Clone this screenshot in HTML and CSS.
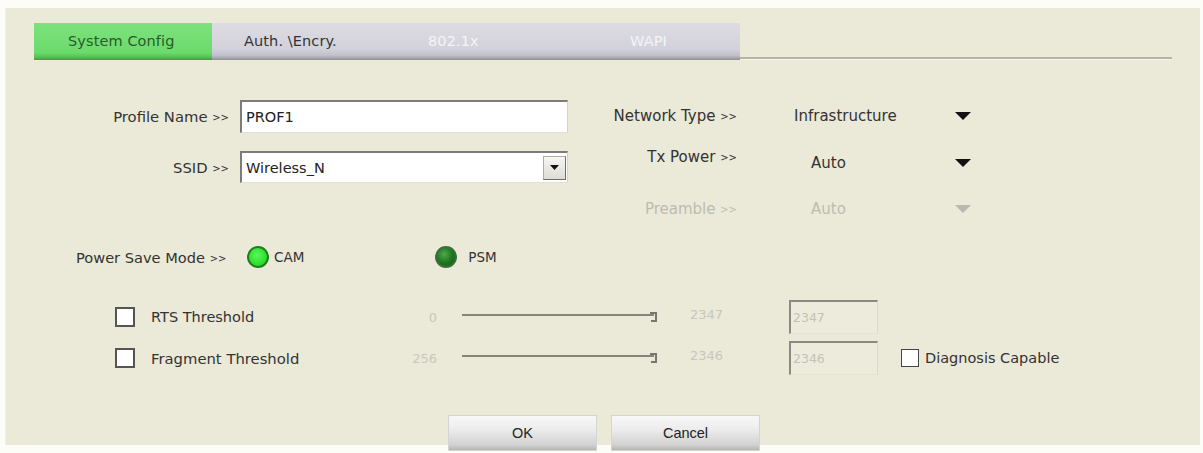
FILE: index.html
```html
<!DOCTYPE html>
<html>
<head>
<meta charset="utf-8">
<link rel="stylesheet" href="styles.css">
</head>
<body>
<div class="panel">
  <div class="tabs">
    <div class="tab tab-sys">System Config</div>
    <div class="tab tab-auth">Auth. \Encry.</div>
    <div class="tab tab-8021x disabled">802.1x</div>
    <div class="tab tab-wapi disabled">WAPI</div>
    <div class="tab-rule"></div>
  </div>

  <div class="top">
    <div class="left">
      <div class="lrow lrow-1">
        <div class="llabel">Profile Name <span class="gt">&gt;&gt;</span></div>
        <div class="field">PROF1</div>
      </div>
      <div class="lrow lrow-2">
        <div class="llabel">SSID <span class="gt">&gt;&gt;</span></div>
        <div class="field combo"><span class="combo-text">Wireless_N</span>
          <span class="combo-btn"><svg width="9" height="5" viewBox="0 0 9 5"><polygon points="0,0 9,0 4.5,5" fill="#111"/></svg></span>
        </div>
      </div>
    </div>
    <div class="right">
      <div class="rrow rrow-1">
        <div class="rlabel">Network Type <span class="gt">&gt;&gt;</span></div>
        <div class="rvalue">Infrastructure</div>
        <svg class="arrow" width="16" height="8" viewBox="0 0 16 8"><polygon points="0,0 16,0 8,8" fill="#111"/></svg>
      </div>
      <div class="rrow rrow-2">
        <div class="rlabel up">Tx Power <span class="gt">&gt;&gt;</span></div>
        <div class="rvalue down center">Auto</div>
        <svg class="arrow down" width="16" height="8" viewBox="0 0 16 8"><polygon points="0,0 16,0 8,8" fill="#111"/></svg>
      </div>
      <div class="rrow rrow-3 dim">
        <div class="rlabel">Preamble <span class="gt">&gt;&gt;</span></div>
        <div class="rvalue center">Auto</div>
        <svg class="arrow" width="16" height="8" viewBox="0 0 16 8"><polygon points="0,0 16,0 8,8" fill="#b8b8b0"/></svg>
      </div>
    </div>
  </div>

  <div class="psm-row">
    <div class="psm-label">Power Save Mode <span class="gt">&gt;&gt;</span></div>
    <div class="radio-group radio-cam">
      <span class="radio on"></span><span class="radio-text">CAM</span>
    </div>
    <div class="radio-group radio-psm">
      <span class="radio dark"></span><span class="radio-text">PSM</span>
    </div>
  </div>

  <div class="thr-row thr-rts">
    <span class="check"></span>
    <span class="thr-label">RTS Threshold</span>
    <span class="thr-min">0</span>
    <svg class="slider" width="200" height="14" viewBox="0 0 200 14"><path d="M0 5 H192" stroke="#85857f" stroke-width="2" fill="none"/><path d="M188 3 H194 V11 H189" stroke="#77776f" stroke-width="2" fill="none"/></svg>
    <span class="thr-max">2347</span>
    <span class="thr-box">2347</span>
  </div>
  <div class="thr-row thr-frag">
    <span class="check"></span>
    <span class="thr-label">Fragment Threshold</span>
    <span class="thr-min">256</span>
    <svg class="slider" width="200" height="14" viewBox="0 0 200 14"><path d="M0 5 H192" stroke="#85857f" stroke-width="2" fill="none"/><path d="M188 3 H194 V11 H189" stroke="#77776f" stroke-width="2" fill="none"/></svg>
    <span class="thr-max">2346</span>
    <span class="thr-box">2346</span>
    <span class="check small"></span>
    <span class="diag-label">Diagnosis Capable</span>
  </div>

  <div class="buttons">
    <div class="btn btn-ok">OK</div>
    <div class="btn btn-cancel">Cancel</div>
  </div>
</div>
</body>
</html>
```

FILE: styles.css
```css
html, body {
  margin: 0;
  padding: 0;
  background: #fdfdf8;
}
body {
  font-family: "DejaVu Sans", Verdana, sans-serif;
  color: #333;
  width: 1203px;
  height: 453px;
  overflow: hidden;
}
.panel {
  margin: 8px 3px 0 5px;
  height: 437px;
  background: #ebe9d8;
  border-left: 1px solid #f2f1e6;
  box-sizing: border-box;
}

/* tabs */
.tabs {
  display: flex;
  padding-top: 15px;
  padding-left: 28px;
  height: 52px;
  box-sizing: border-box;
}
.tab {
  height: 37px;
  box-sizing: border-box;
  font-size: 14.5px;
  line-height: 37px;
  white-space: nowrap;
  letter-spacing: 0.1px;
}
.tab-sys {
  width: 178px;
  padding-left: 34px;
  color: #2c5a2c;
  background: linear-gradient(#7de27d, #6bdb6b 80%, #55c255 92%, #3f9c3f);
}
.tab-auth, .tab-8021x, .tab-wapi {
  background: linear-gradient(#dddce2, #d3d2dc 70%, #c1c0ca 88%, #8f8f96);
}
.tab-auth { width: 183px; padding-left: 32px; color: #333; }
.tab-8021x { width: 200px; padding-left: 33px; }
.tab-wapi { width: 145px; padding-left: 35px; }
.tab.disabled { color: #f4f4f6; }
.tab-rule {
  align-self: flex-end;
  width: 432px;
  height: 3px;
  border-top: 2px solid #b6b4a5;
  border-bottom: 1px solid #f7f6ee;
  box-sizing: border-box;
}

/* top section */
.top {
  display: flex;
  margin-top: 40px;
  height: 130px;
}
.left { width: 562px; }
.lrow {
  display: flex;
  align-items: center;
}
.lrow-1 { height: 33px; }
.lrow-2 { height: 32px; margin-top: 18px; }
.llabel {
  width: 223px;
  text-align: right;
  font-size: 14.8px;
  color: #333;
  white-space: nowrap;
}
.gt {
  font-size: 10px;
  letter-spacing: 0;
  vertical-align: 1px;
}
.field {
  margin-left: 11px;
  width: 328px;
  height: 100%;
  box-sizing: border-box;
  background: #fff;
  border-top: 2px solid #7c7c78;
  border-left: 2px solid #7c7c78;
  border-right: 1px solid #d6d4c8;
  border-bottom: 1px solid #e2e0d6;
  font-size: 14.5px;
  color: #222;
  padding-left: 4px;
  display: flex;
  align-items: center;
}
.combo { justify-content: space-between; padding-right: 1px; }
.combo-btn {
  width: 23px;
  height: 24px;
  box-sizing: border-box;
  background: linear-gradient(#f6f6f2, #dddcd4);
  border: 1px solid #b0aea4;
  border-right-color: #6e6e68;
  border-bottom-color: #6e6e68;
  display: flex;
  align-items: center;
  justify-content: center;
}

.right { width: 420px; }
.rrow {
  display: flex;
  align-items: center;
  font-size: 15px;
  color: #333;
}
.rrow-1 { height: 31px; }
.rrow-2 { height: 48px; margin-top: 6px; }
.rrow-3 { height: 47px; }
.rlabel {
  width: 169px;
  text-align: right;
  white-space: nowrap;
}
.rvalue {
  width: 159px;
  margin-left: 57px;
  white-space: nowrap;
}
.rvalue.center { padding-left: 17px; box-sizing: border-box; }
.up { margin-top: -8px; }
.down { margin-top: 4px; }
.arrow { margin-left: 2px; }
.arrow.down { margin-top: 4px; }
.dim { color: #bdbcb2; }

/* power save */
.psm-row {
  display: flex;
  align-items: center;
  height: 30px;
  margin-top: 12px;
}
.psm-label {
  margin-left: 70px;
  width: 170px;
  font-size: 14.6px;
  white-space: nowrap;
}
.radio-group { display: flex; align-items: center; }
.radio-cam { margin-left: 1px; }
.radio-psm { margin-left: 131px; }
.radio {
  width: 22px;
  height: 22px;
  border-radius: 50%;
  box-sizing: border-box;
  display: inline-block;
}
.radio.on {
  background: radial-gradient(circle at 45% 40%, #5cf65c, #2fe02f 60%, #20c020);
  border: 2px solid #1e7e1e;
}
.radio.dark {
  background: radial-gradient(circle at 40% 35%, #4ea84e, #1c741c 55%, #135e13);
  border: 2px solid #3b6e3b;
}
.radio-text {
  font-size: 13.5px;
  margin-left: 5px;
  color: #333;
}
.radio-psm .radio-text { margin-left: 11px; }

/* thresholds */
.thr-row {
  display: flex;
  align-items: center;
  height: 38px;
  font-size: 14.5px;
}
.thr-rts { margin-top: 26px; }
.thr-frag { margin-top: 3px; }
.check {
  margin-left: 109px;
  width: 20px;
  height: 20px;
  box-sizing: border-box;
  background: #fff;
  border: 2px solid #555;
  display: inline-block;
}
.thr-label {
  margin-left: 16px;
  width: 253px;
  color: #333;
  white-space: nowrap;
}
.thr-min {
  width: 33px;
  text-align: right;
  color: #c8c7bd;
  font-size: 13px;
}
.thr-frag .thr-label { font-size: 14.8px; }
.thr-rts .thr-min { width: 20px; }
.thr-rts .thr-label { width: 266px; }
.slider {
  margin-left: 25px;
  margin-top: 0;
}
.thr-max {
  margin-left: 28px;
  width: 70px;
  color: #c8c7bd;
  font-size: 13px;
  margin-top: -5px;
}
.thr-box {
  margin-left: 29px;
  width: 89px;
  height: 34px;
  box-sizing: border-box;
  border-top: 2px solid #8a8a82;
  border-left: 2px solid #8a8a82;
  border-right: 1px solid #dcdacd;
  border-bottom: 1px solid #e4e2d6;
  background: #edebdc;
  color: #c3c2b8;
  font-size: 12.5px;
  padding-left: 2px;
  display: flex;
  align-items: center;
}
.check.small {
  margin-left: 23px;
  width: 18px;
  height: 18px;
  border: 1.5px solid #444;
}
.diag-label {
  margin-left: 6px;
  color: #333;
  white-space: nowrap;
}

/* buttons */
.buttons {
  display: flex;
  margin-top: 38px;
  margin-left: 442px;
  gap: 14px;
}
.btn {
  width: 149px;
  height: 36px;
  box-sizing: border-box;
  background: linear-gradient(#f8f8f8, #ececec 40%, #d2d2d2 85%, #b4b4b4);
  border: 1px solid #d4d4d0;
  font-family: "Liberation Sans", Arial, sans-serif;
  font-size: 14.5px;
  color: #222;
  display: flex;
  align-items: center;
  justify-content: center;
}
```
